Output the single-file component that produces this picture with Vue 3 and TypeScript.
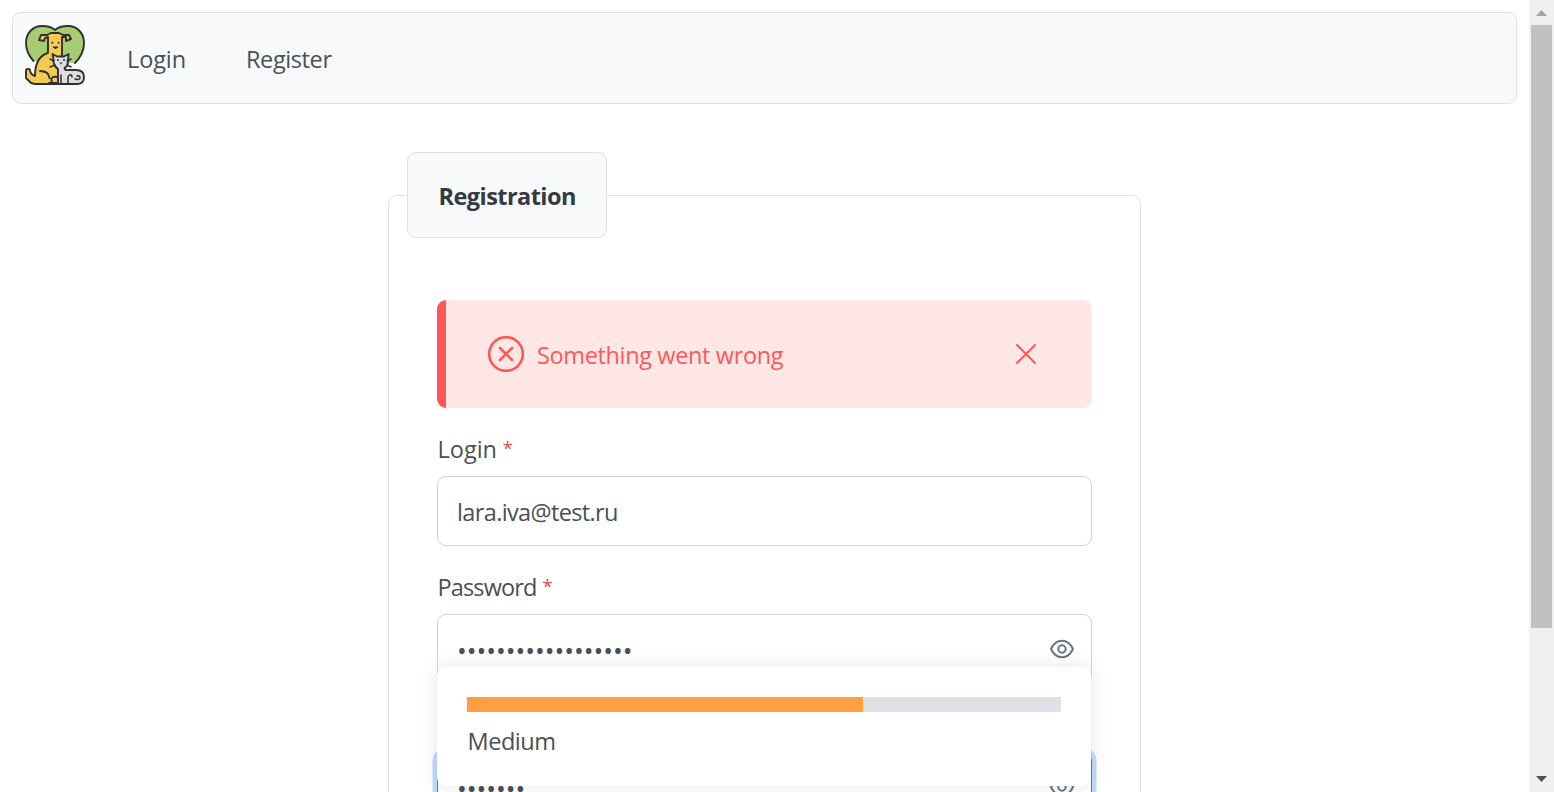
<script setup lang="ts">
import { ref } from 'vue'

const navigation = ['Login', 'Register']
const login = ref('lara.iva@test.ru')
const passwordLength = 18
const repeatLength = 7
const strength = ref({ label: 'Medium', percent: 66.66 })
const messageVisible = ref(true)
const mask = (count: number): string => '•'.repeat(count)
</script>

<template>
  <div class="window">
    <div class="page">
      <nav class="menubar">
        <svg class="logo" viewBox="0 0 60 60">
          <g stroke="#302f31" stroke-width="1.9" stroke-linejoin="round" stroke-linecap="round">
            <path d="M8.500 36C3 30 1 25 1 18C1 8 8 1 17 1C23 1 27 2 30 5C33 2 37 1 43 1C52 1 59 8 59 18C59 26 56 32 50 38" fill="#a8cc74" />
            <path d="M10 59H35V44L37 31V12H41V16L46 14L44 10H38L34 8H26L22 10H16L14 15L19 16L20 13L23 12V28C16 30 10 36 10 51C7 50 5 49 5 45C5 43.500 1 43.500 1 45.500V53L6 58Z" fill="#f3ca52" />
            <path d="M15 46C21 46 24 48 24.500 53M24 58H32M32 52C28 51 25 53 27 57" fill="none" />
            <path d="M33 58V44C29 41 28 38 28.500 34L27.500 29L32 31.500H39L43.500 29L43 36C43 40 42 42 39.500 43C40 46 42 45 44 45H51C56 45 59 47 59 52C59 57 56 59 52 59H34" fill="#dedee0" />
            <path d="M36 50V58M43 58V52C44 49 47 49 47 52M52 51C54 50 56 52 54.500 54C53 55 50 54 50 54M25 34L29 36M25 42L30 40M42 40L46 42M42 36L46 34" fill="none" stroke-width="1.5" />
          </g>
          <g fill="#302f31">
            <circle cx="27.300" cy="17.700" r="1" />
            <circle cx="33.500" cy="17.700" r="1" />
            <path d="M28 21.500H33V23H31.500V24H29.500V23H28ZM34.500 37.500H37.500L36 39.500Z" />
            <circle cx="33" cy="35" r="1" />
            <circle cx="39" cy="35" r="1" />
          </g>
        </svg>
        <a v-for="item in navigation" :key="item" :class="['nav-link', item.toLowerCase()]">{{ item }}</a>
      </nav>

      <fieldset class="card">
        <legend class="legend">Registration</legend>
        <div v-if="messageVisible" class="message">
          <svg class="error-icon" viewBox="0 0 36 36">
            <circle cx="18" cy="18" r="16.800" />
            <path d="M12 12L24 24M24 12L12 24" />
          </svg>
          <span class="message-text">Something went wrong</span>
          <svg class="close-icon" viewBox="0 0 20 20" @click="messageVisible = false">
            <path d="M1 1L19 19M19 1L1 19" />
          </svg>
        </div>

        <div class="label"><span>Login</span><span class="required">*</span></div>
        <div class="field"><span class="value">{{ login }}</span></div>

        <div class="label"><span class="label-password">Password</span><span class="required">*</span></div>
        <div class="password">
          <div class="field">
            <span class="dots">{{ mask(passwordLength) }}</span>
            <svg class="eye" viewBox="0 0 24 20"><path d="M1 10C6-1 18-1 23 10C18 21 6 21 1 10Z" /><circle cx="12" cy="10" r="3.700" /></svg>
          </div>
          <div class="strength">
            <div class="meter"><div class="meter-fill" :style="{ width: strength.percent + '%' }"></div></div>
            <span class="strength-label">{{ strength.label }}</span>
          </div>
        </div>

        <div class="field focused">
          <span class="dots">{{ mask(repeatLength) }}</span>
          <svg class="eye" viewBox="0 0 24 20"><path d="M1 10C6-1 18-1 23 10C18 21 6 21 1 10Z" /><circle cx="12" cy="10" r="3.700" /></svg>
        </div>
      </fieldset>
    </div>
    <div class="scrollbar">
      <svg class="arrow" viewBox="0 0 25 25"><path d="M7 16H18L12.500 10Z" fill="#a3a3a3" /></svg>
      <div class="thumb"></div>
      <svg class="arrow" viewBox="0 0 25 25"><path d="M7 9H18L12.500 15Z" fill="#505050" /></svg>
    </div>
  </div>
</template>

<style>
body {
  margin: 0;
  overflow: hidden;
}
</style>

<style scoped>
* {
  box-sizing: border-box;
}
.window {
  display: flex;
  width: 1554px;
  height: 792px;
  overflow: hidden;
  background: #fff;
  color: #495057;
  font: 23.5px/32px "Open Sans", "Noto Sans", sans-serif;
  white-space: nowrap;
}
.page {
  width: 1529px;
  height: 792px;
  padding: 12px;
  overflow: hidden;
}
.menubar {
  display: flex;
  align-items: center;
  height: 92px;
  padding: 0 12px 6px;
  border: 1px solid #dee2e6;
  border-radius: 9px;
  background: #f8f9fb;
}
.logo {
  width: 60px;
  height: 60px;
  margin-right: 42px;
}
.nav-link {
  margin-right: 60px;
  padding-top: 7px;
}
.nav-link.login {
  letter-spacing: -0.1px;
}
.nav-link.register {
  letter-spacing: -0.4px;
}
.card {
  width: 753px;
  height: 900px;
  margin: 48px auto 0;
  padding: 62px 48px 0;
  border: 1px solid #dee2e6;
  border-radius: 9px;
}
.legend {
  width: 200px;
  height: 86px;
  margin-left: -30px;
  padding: 27px 0 0 30.5px;
  border: 1px solid #dee2e6;
  border-radius: 9px;
  background: #f8f9fb;
  color: #343a40;
  font-weight: 700;
  letter-spacing: -0.55px;
}
.message {
  display: flex;
  align-items: center;
  height: 108px;
  padding: 0 56px 0 42px;
  border-left: 9px solid #ff5757;
  border-radius: 9px;
  background: #ffe7e6;
  color: #ff5757;
}
.error-icon {
  width: 36px;
  height: 36px;
  margin-right: 13px;
  fill: none;
  stroke: #ff5757;
  stroke-width: 2.6;
  stroke-linecap: round;
}
.message-text {
  flex: 1;
  padding-top: 2px;
  letter-spacing: -0.36px;
}
.close-icon {
  width: 20px;
  height: 20px;
  fill: none;
  stroke: #ff5757;
  stroke-width: 2;
  stroke-linecap: round;
}
.label {
  display: flex;
  gap: 6px;
  height: 68px;
  padding: 25px 0 0 0.5px;
}
.label-password {
  letter-spacing: -0.85px;
}
.required {
  margin: -1px 0 0 -0.5px;
  color: #e24c4c;
  font-size: 19px;
}
.field {
  display: flex;
  align-items: center;
  justify-content: space-between;
  height: 70px;
  padding: 0 17px 0 19px;
  border: 1px solid #ced4da;
  border-radius: 9px;
  background: #fff;
}
.value {
  padding-top: 2px;
  letter-spacing: -0.63px;
}
.password {
  position: relative;
  margin-bottom: 68px;
}
.dots {
  padding-top: 1px;
  font-size: 26px;
  letter-spacing: -0.03px;
}
.eye {
  width: 24px;
  height: 20px;
  margin-bottom: 1px;
  fill: none;
  stroke: #6c757d;
  stroke-width: 2;
}
.strength {
  position: absolute;
  z-index: 2;
  top: 53px;
  left: 0;
  width: 654px;
  height: 119px;
  padding: 30px;
  border-radius: 9px;
  background: #fff;
  box-shadow: 0 0 21px rgba(0, 0, 0, 0.1);
}
.meter {
  height: 15px;
  margin-bottom: 13px;
  background: #dee2e6;
}
.meter-fill {
  height: 15px;
  background: #ff9f42;
}
.strength-label {
  letter-spacing: -0.45px;
  padding-left: 0.5px;
}
.focused {
  border-color: #3b82f6;
  box-shadow: 0 0 0 4.5px #bfdbfe;
}
.scrollbar {
  width: 25px;
  height: 792px;
  background: #f0f0f0;
}
.arrow {
  display: block;
  width: 25px;
  height: 25px;
}
.thumb {
  width: 21px;
  height: 603px;
  margin: 0 2px 139px;
  background: #c1c1c1;
}
</style>
